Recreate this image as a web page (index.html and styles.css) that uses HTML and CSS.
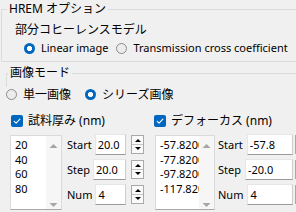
FILE: index.html
```html
<!DOCTYPE html>
<html lang="ja">
<head>
<meta charset="utf-8">
<title>HREM オプション</title>
<link rel="stylesheet" href="styles.css">
</head>
<body>
<fieldset class="group hrem">
  <legend class="group-title">HREM オプション</legend>
  <div class="subtitle">部分コヒーレンスモデル</div>
  <div class="radios r1">
    <label class="radio on"><span class="dot"></span><span class="lat">Linear image</span></label>
    <label class="radio tcc"><span class="dot"></span><span class="lat">Transmission cross coefficient</span></label>
  </div>
</fieldset>
<fieldset class="group mode">
  <legend class="group-title">画像モード</legend>
</fieldset>
<div class="radios r2">
  <label class="radio"><span class="dot"></span><span>単一画像</span></label>
  <label class="radio on series-radio"><span class="dot"></span><span>シリーズ画像</span></label>
</div>
<div class="series">
  <div class="col col-a">
    <label class="check"><span class="box"><svg width="12" height="12" viewBox="0 0 12 12"><path d="M3.2 6.3 L5.1 8.1 L8.9 4.2" fill="none" stroke="#fff" stroke-width="1.1" stroke-linecap="round" stroke-linejoin="round"/></svg></span><span>試料厚み (nm)</span></label>
    <div class="panel">
      <div class="listbox">
        <ul class="items">
          <li>20</li><li>40</li><li>60</li><li>80</li>
        </ul>
        <div class="scroll">
          <svg width="15" height="6" viewBox="0 0 15 6"><path d="M3.5 5 L7.5 1 L11.5 5 Z" fill="#a6a6a6"/></svg>
          <svg width="15" height="6" viewBox="0 0 15 6"><path d="M3.5 1 L7.5 5 L11.5 1 Z" fill="#a6a6a6"/></svg>
        </div>
      </div>
      <div class="fields">
        <div class="field"><span class="lab">Start</span><span class="input">20.0</span><span class="spin"><span class="up"></span><span class="down"></span></span></div>
        <div class="field"><span class="lab">Step</span><span class="input">20.0</span><span class="spin"><span class="up"></span><span class="down"></span></span></div>
        <div class="field"><span class="lab">Num</span><span class="input">4</span><span class="spin"><span class="up"></span><span class="down"></span></span></div>
      </div>
    </div>
  </div>
  <div class="col col-b">
    <label class="check"><span class="box"><svg width="12" height="12" viewBox="0 0 12 12"><path d="M3.2 6.3 L5.1 8.1 L8.9 4.2" fill="none" stroke="#fff" stroke-width="1.1" stroke-linecap="round" stroke-linejoin="round"/></svg></span><span>デフォーカス (nm)</span></label>
    <div class="panel">
      <div class="listbox">
        <ul class="items">
          <li>-57.8200</li><li>-77.8200</li><li>-97.8200</li><li>-117.8200</li>
        </ul>
        <div class="scroll">
          <svg width="15" height="6" viewBox="0 0 15 6"><path d="M3.5 5 L7.5 1 L11.5 5 Z" fill="#a6a6a6"/></svg>
          <svg width="15" height="6" viewBox="0 0 15 6"><path d="M3.5 1 L7.5 5 L11.5 1 Z" fill="#a6a6a6"/></svg>
        </div>
      </div>
      <div class="fields">
        <div class="field"><span class="lab">Start</span><span class="input">-57.8</span><span class="spin"><span class="up"></span><span class="down"></span></span></div>
        <div class="field"><span class="lab">Step</span><span class="input">-20.0</span><span class="spin"><span class="up"></span><span class="down"></span></span></div>
        <div class="field"><span class="lab">Num</span><span class="input">4</span><span class="spin"><span class="up"></span><span class="down"></span></span></div>
      </div>
    </div>
  </div>
</div>
</body>
</html>
```
FILE: styles.css
```css
* { box-sizing: border-box; }
html, body { margin: 0; padding: 0; }
body {
  width: 296px;
  height: 212px;
  overflow: hidden;
  background: #f0f0f0;
  color: #000;
  font-family: "Noto Sans", "Noto Sans CJK JP", sans-serif;
  font-size: 12px;
  line-height: 16px;
}
.lat, .lab, .input, .items { font-size: 11px; }

.group {
  border: 1px solid #dcdcdc;
  border-right: none;
  min-width: 0;
}
.group-title {
  padding: 0 2px;
  font-size: 12px;
  line-height: 16px;
}
.hrem {
  margin: 1px -40px 0 1px;
  padding: 0 0 5px 0;
}
.hrem .group-title { margin-left: 5px; }
.subtitle {
  margin: 5px 0 0 13px;
  height: 16px;
}
.radios {
  display: flex;
  align-items: center;
  height: 16px;
}
.r1 { margin: 2px 0 0 22px; }
.radio {
  display: flex;
  align-items: center;
  gap: 6px;
  white-space: nowrap;
}
.dot {
  width: 11px;
  height: 11px;
  border-radius: 50%;
  border: 1px solid #8c8c8c;
  background: #ececec;
  flex: none;
}
.radio.on .dot {
  border: none;
  background: radial-gradient(circle at center, #fff 0 2.3px, #0067c0 2.9px);
}
.tcc { margin-left: 8px; }

.mode {
  margin: 3px -40px 0 6px;
  padding: 0 0 6px 0;
  border-bottom: none;
}
.mode .group-title { margin-left: 1px; }
.r2 { margin: 0 0 0 6px; height: 15px; }
.series-radio { margin-left: 14px; }

.series {
  display: flex;
  margin-top: 11px;
}
.col-a { margin-left: 10px; width: 134px; flex: none; }
.col-b { margin-left: 10px; width: 160px; flex: none; }
.check {
  display: flex;
  align-items: center;
  gap: 5px;
  height: 16px;
  margin-left: 1px;
  white-space: nowrap;
}
.col-b .check { margin-left: 0; }
.box {
  width: 12px;
  height: 12px;
  border-radius: 2px;
  background: #0067c0;
  display: flex;
  flex: none;
}
.panel {
  display: flex;
  margin-top: 5px;
}
.listbox {
  display: flex;
  margin-top: 1px;
  width: 52px;
  height: 75px;
  background: #fff;
  border: 1px solid #dadada;
  border-bottom-color: #a8a8a8;
  flex: none;
}
.col-b .listbox { width: 60px; margin-left: 1px; }
.items {
  list-style: none;
  margin: 0;
  padding: 2px 0 0 4px;
  flex: 1;
  min-width: 0;
  overflow: hidden;
  white-space: nowrap;
  line-height: 14.7px;
}
.scroll {
  width: 15px;
  flex: none;
  background: #f6f6f6;
  display: flex;
  flex-direction: column;
  justify-content: space-between;
  padding: 7px 0 1px;
}
.scroll svg { display: block; }
.fields {
  display: flex;
  flex-direction: column;
  gap: 4px;
  margin-left: 5px;
  flex: 1;
  min-width: 0;
}
.col-b .fields { margin-left: 3px; flex: none; width: 90px; }
.field {
  display: flex;
  align-items: center;
  height: 21px;
}
.lab { white-space: nowrap; }
.input {
  flex: 1;
  height: 21px;
  margin-left: 3px;
  padding-left: 2px;
  background: #fff;
  border: 1px solid #e6e6e6;
  border-right-color: #cdcdcd;
  border-bottom-color: #9a9a9a;
  line-height: 19px;
  white-space: nowrap;
}
.col-b .input { margin-left: 4px; }
.spin {
  width: 13px;
  height: 19px;
  margin-left: 5px;
  flex: none;
  border: 1px solid #a9a9a9;
  background: #fafafa;
  display: flex;
  flex-direction: column;
}
.col-b .spin { margin-left: 2px; }
.up, .down {
  flex: 1;
  position: relative;
}
.up { border-bottom: 1px solid #c4c4c4; }
.up::after, .down::after {
  content: "";
  position: absolute;
  left: 3px;
  border-left: 3px solid transparent;
  border-right: 3px solid transparent;
}
.up::after { top: 3px; border-bottom: 3px solid #000; }
.down::after { top: 2px; border-top: 3px solid #000; }
```
